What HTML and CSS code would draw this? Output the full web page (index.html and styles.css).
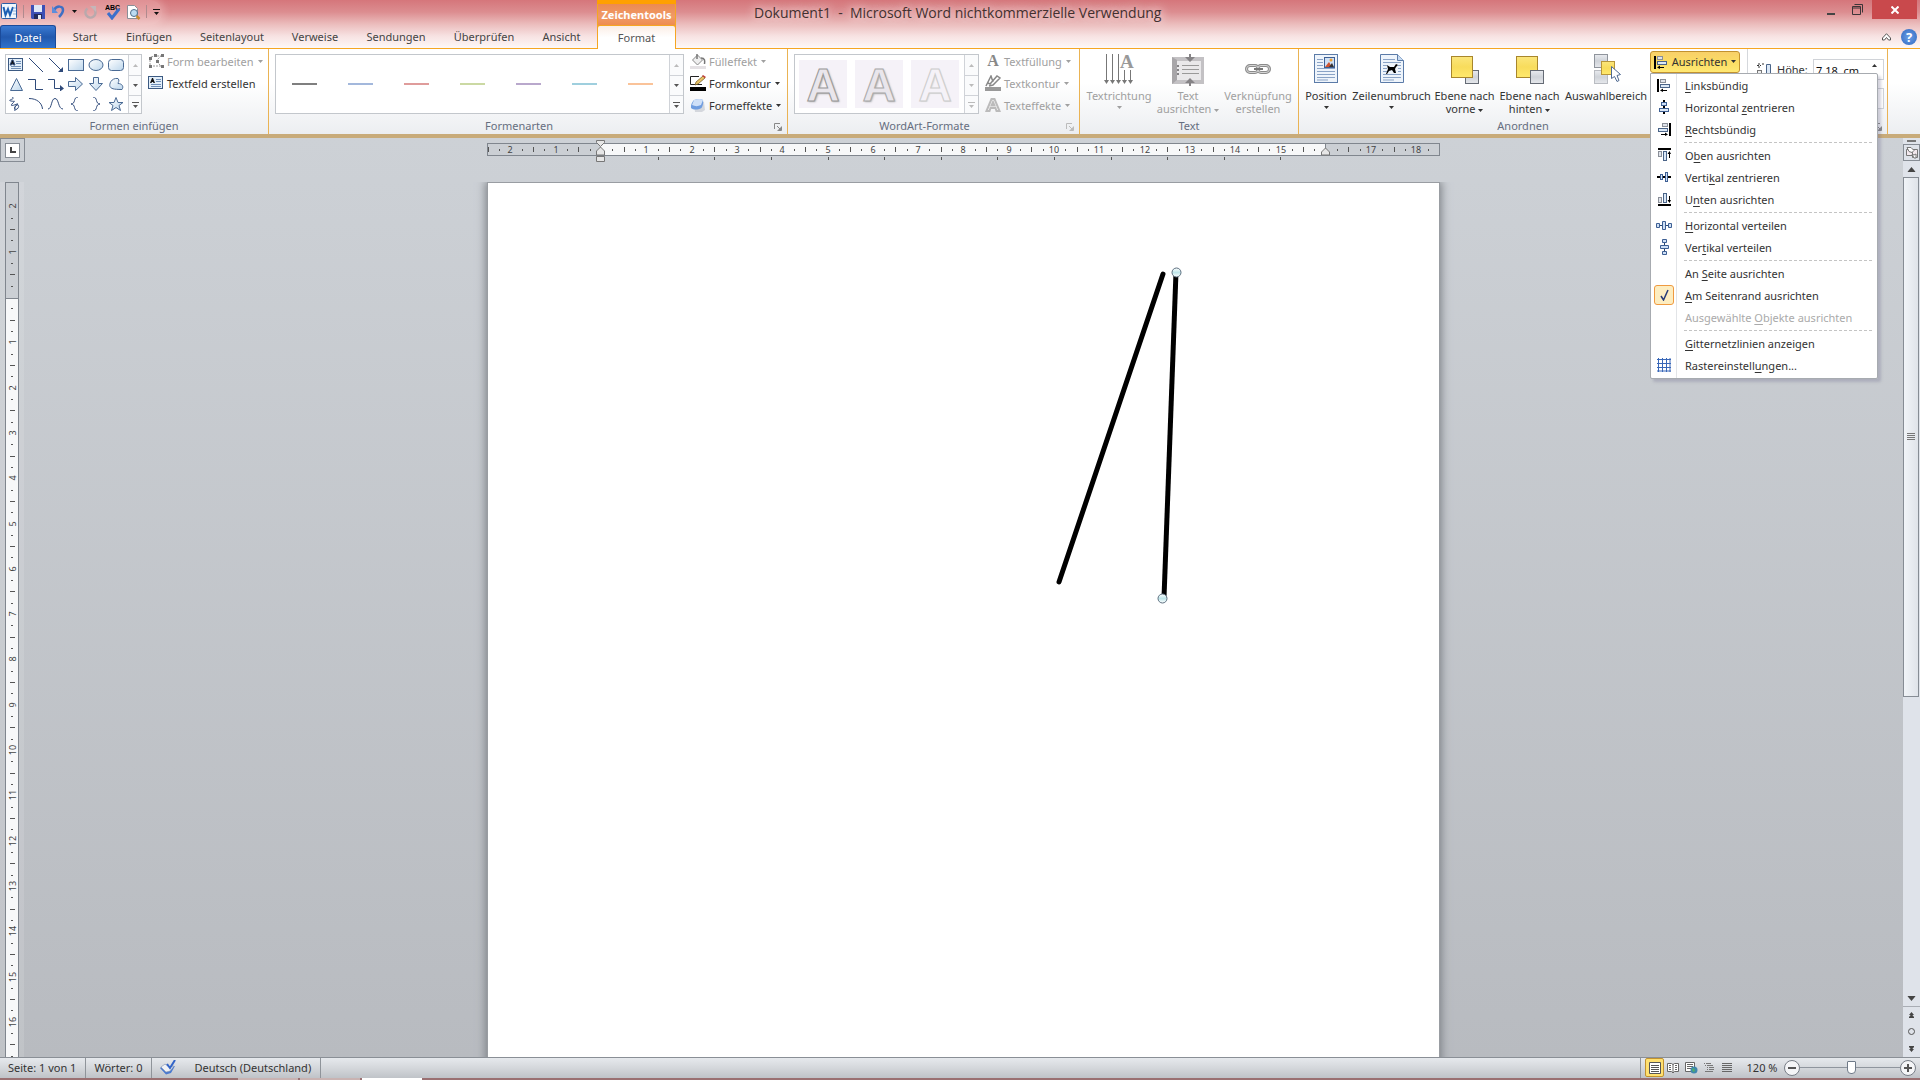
FILE: index.html
```html
<!DOCTYPE html>
<html lang="de">
<head>
<meta charset="utf-8">
<title>Dokument1 - Microsoft Word nichtkommerzielle Verwendung</title>
<link rel="stylesheet" href="styles.css">
</head>
<body>
<svg class="defs" width="0" height="0" aria-hidden="true">
  <defs>
    <linearGradient id="gBlue" x1="0" y1="0" x2="1" y2="1"><stop offset="0" stop-color="#fff"/><stop offset="1" stop-color="#bcd6ec"/></linearGradient>
    <linearGradient id="gYel" x1="0" y1="0" x2="0" y2="1"><stop offset="0" stop-color="#fbe67c"/><stop offset=".5" stop-color="#f8dc5c"/><stop offset="1" stop-color="#ffe96c"/></linearGradient>
    <linearGradient id="gGrey" x1="0" y1="0" x2="0" y2="1"><stop offset="0" stop-color="#e9ebef"/><stop offset=".5" stop-color="#cfd3d9"/><stop offset="1" stop-color="#e6e8ec"/></linearGradient>
    <linearGradient id="gKnob" x1="0" y1="0" x2="0" y2="1"><stop offset="0" stop-color="#fff"/><stop offset=".5" stop-color="#bfe6ea"/><stop offset="1" stop-color="#fff"/></linearGradient>
    <symbol id="dd" viewBox="0 0 5 3"><path d="M0 0h5L2.500 3z" fill="currentColor"/></symbol>
    <symbol id="up" viewBox="0 0 5 3"><path d="M0 3h5L2.500 0z" fill="currentColor"/></symbol>
    <symbol id="more" viewBox="0 0 7 6"><path d="M0 0h7v1H0zM1 3h5L3.500 6z" fill="currentColor"/></symbol>
    <symbol id="launch" viewBox="0 0 8 8"><path d="M.5 6V.5H6M3 3l3 3M7.500 3.500v4h-4" fill="none" stroke="currentColor"/><path d="M7 4v3H4z" fill="currentColor"/></symbol>
    <symbol id="tbox" viewBox="0 0 16 14"><rect x=".5" y=".5" width="14" height="12" fill="#e3effa" stroke="#3c5a82"/><path d="M2 7l2-5h1l2 5H5.500L5 6H4l-.5 1z" fill="#111"/><path d="M8 3.500h5M8 5.500h5M3 8.500h10M3 10.500h10" stroke="#6f8fb8"/></symbol>
    <symbol id="alL" viewBox="0 0 14 14"><path d="M0 1h2v13H0z" fill="#000"/><rect x="3.500" y="1.500" width="5" height="3" fill="#dfe3ea" stroke="#8a8f98"/><rect x="3.500" y="6.500" width="9" height="3" fill="#dbe8f6" stroke="#4a6488"/><path d="M5 12h5v1H5zM3 12.500L6 10.500v3.500z" fill="#000"/></symbol>
  </defs>
</svg>

<header class="top">
  <div class="top-left">
    <div class="qat">
      <svg width="17" height="17" viewBox="0 0 17 17"><rect x=".5" y=".5" width="15" height="15" rx="1" fill="#f1f6fc" stroke="#2b5ea6"/><path d="M2.500 4l2 8 2.500-6 2 6 3-8" fill="none" stroke="#1d5fb4" stroke-width="2"/><path d="M12 5h3M12 8h3M12 11h3" stroke="#8fb0da"/></svg>
      <span class="qsep"></span>
      <button aria-label="Speichern"><svg width="14" height="14" viewBox="0 0 14 14"><path d="M0 0h14v14H1l-1-1z" fill="#3d4fb5"/><path d="M3 0h8v7H3z" fill="#dfe8f7"/><path d="M3 9h8v5H3z" fill="#222a5c"/><path d="M7 10h3v4H7z" fill="#e6ecf6"/></svg></button>
      <button class="undo" aria-label="Rückgängig"><svg width="13" height="13" viewBox="0 0 13 13"><path d="M2 5c3-5 9-4 9 0 0 3-2 5-4 7" fill="none" stroke="#3f6fc4" stroke-width="2.500"/><path d="M0 1v7h6z" fill="#5d8ddb"/></svg><svg width="5" height="3"><use href="#dd"/></svg></button>
      <button class="redo" aria-label="Wiederholen"><svg width="13" height="14" viewBox="0 0 13 14"><path d="M3.500 3.500a5 5 0 1 0 7 1" fill="none" stroke="#b9a9ac" stroke-width="2.500"/><path d="M6 1h6v6z" fill="#c4b6b9"/></svg></button>
      <button aria-label="Rechtschreibung"><svg width="16" height="16" viewBox="0 0 16 16"><text x="0" y="6" font-size="7" class="abc">ABC</text><path d="M3 9l4 5 7-9" fill="none" stroke="#3c6fcb" stroke-width="3"/></svg></button>
      <button aria-label="Seitenansicht"><svg width="15" height="16" viewBox="0 0 15 16"><path d="M1.500 1.500h7l3 3v10h-10z" fill="#fff" stroke="#8a8f98"/><circle cx="8" cy="9" r="3.500" fill="#bcdcf2" stroke="#4d6d8c"/><path d="M10.500 12l3 3" stroke="#c98a2c" stroke-width="2.500"/></svg></button>
      <span class="qsep"></span>
      <button aria-label="Anpassen"><svg width="7" height="6"><use href="#more"/></svg></button>
    </div>
    <nav class="tabs">
      <button class="datei">Datei</button><button>Start</button><button>Einfügen</button><button>Seitenlayout</button><button>Verweise</button><button>Sendungen</button><button>Überprüfen</button><button>Ansicht</button>
    </nav>
  </div>
  <div class="context">
    <div class="context-name">Zeichentools</div>
    <button class="format">Format</button>
  </div>
  <div class="top-right">
    <div class="titlebar">
      <h1>Dokument1&nbsp; -&nbsp; Microsoft Word nichtkommerzielle Verwendung</h1>
      <div class="winbtns">
        <button aria-label="Minimieren"><svg width="8" height="12"><path d="M0 9h8v2H0z" fill="#444"/></svg></button>
        <button aria-label="Wiederherstellen"><svg width="11" height="11" viewBox="0 0 11 11"><path d="M.5 2.500h8v8h-8zM.5 4h8M2.500 .5h8v8" fill="none" stroke="#3c3538"/></svg></button>
        <button class="close" aria-label="Schließen"><svg width="8" height="8" viewBox="0 0 8 8"><path d="M.5 .5l7 7M7.500 .5l-7 7" stroke="#fff" stroke-width="2"/></svg></button>
      </div>
    </div>
    <div class="helprow">
      <button aria-label="Menüband minimieren"><svg width="9" height="8" viewBox="0 0 9 8"><path d="M4.500 .7L8.500 5v2H6.500l-2-2.500L2.500 7H.5V5z" fill="#fff" stroke="#555"/></svg></button>
      <button class="help" aria-label="Hilfe">?</button>
    </div>
  </div>
</header>

<section class="ribbon">
  <div class="group g1">
    <div class="gbody">
      <div class="gallery shapes">
        <div class="shapegrid">
          <svg viewBox="0 0 16 14"><use href="#tbox"/></svg>
          <svg viewBox="0 0 16 14"><path d="M1 0l14 14"/></svg>
          <svg viewBox="0 0 16 14"><path d="M1 0l12 12"/><path class="f" d="M15 14v-5l-5 5z"/></svg>
          <svg viewBox="0 0 16 14"><rect class="b" x=".5" y="1.500" width="15" height="11"/></svg>
          <svg viewBox="0 0 16 14"><ellipse class="b" cx="8" cy="7" rx="7" ry="5.500"/></svg>
          <svg viewBox="0 0 16 14"><rect class="b" x=".5" y="1.500" width="15" height="11" rx="3"/></svg>
          <svg viewBox="0 0 16 14"><path class="b" d="M8.500 1.500l6 12h-12z"/></svg>
          <svg viewBox="0 0 16 14"><path d="M0 2.500h7.500v10H15"/></svg>
          <svg viewBox="0 0 16 14"><path d="M0 2.500h6.500v9H12"/><path class="f" d="M12 8l4 3.500-4 3z"/></svg>
          <svg viewBox="0 0 16 14"><path class="b" d="M.5 4.500h7v-4l7 6.500-7 6.500v-4h-7z"/></svg>
          <svg viewBox="0 0 16 14"><path class="b" d="M5.500 .5h5v6h4l-6.500 7-6.500-7h4z"/></svg>
          <svg viewBox="0 0 16 14"><path class="b" d="M10 1.500c-7-1-9 6-8 8s3 3 12 3c2-3 0-6-4-6 0-1 2-3 0-5z"/></svg>
          <svg viewBox="0 0 16 14"><path d="M4 0c5 2-6 3-1 4s4-1 1 3 6-1 6 0-5 3-3 5 5-3 3-4-4 2-3 6"/></svg>
          <svg viewBox="0 0 16 14"><path d="M1 1.500C9 1.500 14 6 14.500 12"/></svg>
          <svg viewBox="0 0 16 14"><path d="M0 12C4 12 3 1.500 7 1.500S10 12 15 12"/></svg>
          <svg viewBox="0 0 16 14"><path d="M10 0C5 0 8 7 3 7c5 0 2 7 7 7"/></svg>
          <svg viewBox="0 0 16 14"><path d="M5 0c5 0 2 7 7 7-5 0-2 7-7 7"/></svg>
          <svg viewBox="0 0 16 14"><path class="b" d="M8 .5l2 5h5l-4 3 1.500 5L8 10.500l-4.500 3L5 8.500l-4-3h5z"/></svg>
        </div>
        <div class="gscroll"><button class="off" aria-label="Nach oben"><svg width="5" height="3"><use href="#up"/></svg></button><button aria-label="Nach unten"><svg width="5" height="3"><use href="#dd"/></svg></button><button aria-label="Weitere"><svg width="7" height="6"><use href="#more"/></svg></button></div>
      </div>
      <div class="smalls">
        <button class="small" disabled><svg width="16" height="14" viewBox="0 0 16 14"><path d="M2 3v9h11l-5-5 5-5H8z" fill="none" stroke="#9a9a9a" stroke-dasharray="2 1"/><path d="M1 3h3v3H1zM6 0h3v3H6zM13 0h3v3h-3zM1 11h3v3H1zM13 11h3v3h-3zM8 6h3v3H8z" fill="#777"/></svg><span>Form bearbeiten</span><svg width="5" height="3"><use href="#dd"/></svg></button>
        <button class="small"><svg width="16" height="14"><use href="#tbox"/></svg><span>Textfeld erstellen</span></button>
      </div>
    </div>
    <div class="glabel">Formen einfügen</div>
  </div>

  <div class="group g2">
    <div class="gbody">
      <div class="gallery styles">
        <div class="lines"><i class="l1"></i><i class="l2"></i><i class="l3"></i><i class="l4"></i><i class="l5"></i><i class="l6"></i><i class="l7"></i></div>
        <div class="gscroll"><button class="off" aria-label="Nach oben"><svg width="5" height="3"><use href="#up"/></svg></button><button aria-label="Nach unten"><svg width="5" height="3"><use href="#dd"/></svg></button><button aria-label="Weitere"><svg width="7" height="6"><use href="#more"/></svg></button></div>
      </div>
      <div class="smalls">
        <button class="small" disabled><svg width="16" height="16" viewBox="0 0 16 16"><path d="M2.500 7l5-5 5 5-5 5z" fill="#eee" stroke="#888"/><path d="M7 6V1M11 5c4 0 4 3 3.500 6" fill="none" stroke="#777" stroke-width="1.500"/><path d="M0 13h16v3H0z" fill="#e4e1e4"/></svg><span>Fülleffekt</span><svg width="5" height="3"><use href="#dd"/></svg></button>
        <button class="small"><svg width="16" height="16" viewBox="0 0 16 16"><path d="M12 9.500H.5v-8H9" fill="#fff" stroke="#222"/><path d="M5 10l1-3 7-6 2 2-7 6z" fill="#e8c264" stroke="#6b5323" stroke-width=".7"/><path d="M12 1l1-1 3 2-1 1z" fill="#c23b3b"/><path d="M0 12h16v4H0z" fill="#000"/></svg><span>Formkontur</span><svg width="5" height="3"><use href="#dd"/></svg></button>
        <button class="small"><svg width="16" height="15" viewBox="0 0 16 15"><path d="M4 5l10-1 1 8-3 2H5z" fill="#d4d7dd"/><path d="M4 2c4-1.500 7-1.500 9 0 .5 3 0 5-1.500 8-4 2-8 2-10.500 0C.5 7 2 4 4 2z" fill="#6f9de0"/><path d="M4 2c4-1.500 7-1.500 9 0l-2 5c-3 1.500-6 1.500-9 0z" fill="#cfe0f8"/></svg><span>Formeffekte</span><svg width="5" height="3"><use href="#dd"/></svg></button>
      </div>
    </div>
    <div class="glabel wide">Formenarten<button class="launch" aria-label="Form formatieren"><svg width="8" height="8"><use href="#launch"/></svg></button></div>
  </div>

  <div class="group g3">
    <div class="gbody">
      <div class="gallery wordart">
        <div class="tiles"><b class="a1">A</b><b class="a2">A</b><b class="a3">A</b></div>
        <div class="gscroll"><button class="off" aria-label="Nach oben"><svg width="5" height="3"><use href="#up"/></svg></button><button class="off" aria-label="Nach unten"><svg width="5" height="3"><use href="#dd"/></svg></button><button class="off" aria-label="Weitere"><svg width="7" height="6"><use href="#more"/></svg></button></div>
      </div>
      <div class="smalls">
        <button class="small" disabled><b class="serifA">A</b><span>Textfüllung</span><svg width="5" height="3"><use href="#dd"/></svg></button>
        <button class="small" disabled><svg width="16" height="16" viewBox="0 0 16 16"><path d="M1 11L6 1l2 6M3 8l2 1 7-8 3 2-7 7-4 1" fill="none" stroke="#888" stroke-width="1.500"/><path d="M0 12h16v4H0z" fill="#999"/></svg><span>Textkontur</span><svg width="5" height="3"><use href="#dd"/></svg></button>
        <button class="small" disabled><svg width="16" height="16" viewBox="0 0 16 16"><path d="M1.500 14L6.500 2h3l5 12h-3l-1-3h-5l-1 3zM6.500 8.500h3L8 5z" fill="#fff" stroke="#bbb" stroke-width="2"/></svg><span>Texteffekte</span><svg width="5" height="3"><use href="#dd"/></svg></button>
      </div>
    </div>
    <div class="glabel wide">WordArt-Formate<button class="launch pale" aria-label="Text formatieren"><svg width="8" height="8"><use href="#launch"/></svg></button></div>
  </div>

  <div class="group g4">
    <div class="gbody bigs">
      <button class="big" disabled><svg width="32" height="32" viewBox="0 0 32 32"><path d="M3.500 0v28M9.500 0v28M15.500 0v28M21.500 16v12M27.500 16v12" stroke="#777"/><path d="M1 26h5l-2.500 4zM7 26h5l-2.500 4zM13 26h5l-2.500 4zM19 26h5l-2.500 4zM25 26h5l-2.500 4z" fill="#777"/><text x="17" y="14" font-size="19" class="ta">A</text></svg><span>Textrichtung</span><svg width="5" height="3"><use href="#dd"/></svg></button>
      <button class="big" disabled><svg width="32" height="32" viewBox="0 0 32 32"><path d="M0 3h32v27H0z" fill="#c3c1c4"/><path d="M3 7h26v19H3z" fill="#e9e8ea"/><path d="M0 3l5 3v20l-5 4z" fill="#a8a6a9"/><path d="M10 11.500h17M10 15.500h17M10 19.500h17" stroke="#999" stroke-width="1"/><path d="M5 11h2v2H5zM5 15h2v2H5zM5 19h2v2H5zM17 0h2v3h4l-5 5-5-5h4zM17 32h2v-3h4l-5-5-5 5h4z" fill="#858386"/></svg><span>Text<br>ausrichten <svg width="5" height="3"><use href="#dd"/></svg></span></button>
      <button class="big" disabled><svg width="32" height="32" viewBox="0 0 32 32"><g fill="none" stroke="#8b8b8b" stroke-width="3"><rect x="4.500" y="11.500" width="12" height="7" rx="3.500"/><rect x="15.500" y="11.500" width="12" height="7" rx="3.500"/></g><g fill="none" stroke="#d6d6d6"><rect x="4.500" y="11.500" width="12" height="7" rx="3.500"/><rect x="15.500" y="11.500" width="12" height="7" rx="3.500"/></g><path d="M12 15h9" stroke="#777" stroke-width="2"/></svg><span>Verknüpfung<br>erstellen</span></button>
    </div>
    <div class="glabel">Text</div>
  </div>

  <div class="group g5">
    <div class="gbody bigs">
      <button class="big"><svg width="32" height="32" viewBox="0 0 32 32"><rect x="4.500" y=".5" width="23" height="28" fill="#eef4fb" stroke="#5b7ba8"/><path d="M7 5.500h6M7 8.500h6M7 11.500h6M7 14.500h18M7 17.500h18M7 20.500h18M7 23.500h18M7 26h11" stroke="#8aa3c6"/><rect x="14.500" y="3.500" width="10" height="10" fill="#cfe0f5" stroke="#3d5f94"/><path d="M15 13l4-5 3 5z" fill="#d0532f"/><path d="M19 13l3-4 2 4z" fill="#333"/><circle cx="21" cy="6" r="1.500" fill="#f0a030"/></svg><span>Position</span><svg width="5" height="3"><use href="#dd"/></svg></button>
      <button class="big"><svg width="32" height="32" viewBox="0 0 32 32"><path d="M4.500 .5h17l6 6v22h-23z" fill="#eef4fb" stroke="#5b7ba8"/><path d="M21.500 .5v6h6" fill="#c7dbf2" stroke="#5b7ba8"/><path d="M7 5.500h12M7 8.500h18M7 11.500h4M22 11.500h3M7 14.500h4M22 14.500h3M7 17.500h4M22 17.500h3M7 20.500h18M7 23.500h18M7 26h11" stroke="#8aa3c6"/><path d="M11 11l3 2h4l2-3 2 1-2 2-1 2 1 4h-2l-2-3-3 1-2 3h-1l2-5z" fill="#000"/></svg><span>Zeilenumbruch</span><svg width="5" height="3"><use href="#dd"/></svg></button>
      <button class="big"><svg width="32" height="32" viewBox="0 0 32 32"><rect x="16.500" y="16.500" width="13" height="13" fill="url(#gGrey)" stroke="#656b75"/><rect x="2.500" y="2.500" width="21" height="21" fill="url(#gYel)" stroke="#a8862c"/></svg><span>Ebene nach<br>vorne <svg width="5" height="3"><use href="#dd"/></svg></span></button>
      <button class="big"><svg width="32" height="32" viewBox="0 0 32 32"><rect x="2.500" y="2.500" width="21" height="21" fill="url(#gYel)" stroke="#a8862c"/><rect x="16.500" y="16.500" width="13" height="13" fill="url(#gGrey)" stroke="#656b75"/></svg><span>Ebene nach<br>hinten <svg width="5" height="3"><use href="#dd"/></svg></span></button>
      <button class="big"><svg width="32" height="32" viewBox="0 0 32 32"><rect x="4.500" y=".5" width="13" height="13" fill="url(#gGrey)" stroke="#8f949c"/><rect x="4.500" y="16.500" width="13" height="13" fill="url(#gGrey)" stroke="#b9bcc2"/><rect x="11.500" y="7.500" width="13" height="13" fill="url(#gYel)" stroke="#b8963a"/><path d="M21.500 12.500v12l3-2 2.500 5 2-1-2-5 3.500-1z" fill="#fff" stroke="#4f6a92"/></svg><span>Auswahlbereich</span></button>
      <div class="align">
        <button class="alignbtn" aria-haspopup="menu" aria-expanded="true"><svg width="14" height="14"><use href="#alL"/></svg><span>Ausrichten</span><svg width="5" height="3"><use href="#dd"/></svg></button>
        <div class="menu" role="menu">
          <button role="menuitem"><i><svg width="14" height="14"><use href="#alL"/></svg></i><span><u>L</u>inksbündig</span></button>
          <button role="menuitem"><i><svg width="12" height="14" viewBox="0 0 12 14"><path d="M5 0h2v14H5z" fill="#000"/><rect x="3.500" y="2.500" width="5" height="3" fill="#cfe0f5" stroke="#3d5f94"/><rect x="1.500" y="8.500" width="9" height="3" fill="#dce8f6" stroke="#3d5f94"/></svg></i><span>Horizontal <u>z</u>entrieren</span></button>
          <button role="menuitem"><i><svg class="flip" width="14" height="14"><use href="#alL"/></svg></i><span><u>R</u>echtsbündig</span></button>
          <hr>
          <button role="menuitem"><i><svg class="rot" width="14" height="14"><use href="#alL"/></svg></i><span>O<u>b</u>en ausrichten</span></button>
          <button role="menuitem"><i><svg width="14" height="12" viewBox="0 0 14 12"><path d="M0 5h14v2H0z" fill="#000"/><rect x="3.500" y="3.500" width="2" height="5" fill="#dce8f6" stroke="#3d5f94"/><rect x="8.500" y="1.500" width="2" height="9" fill="#cfe0f5" stroke="#3d5f94"/></svg></i><span>Verti<u>k</u>al zentrieren</span></button>
          <button role="menuitem"><i><svg class="rotl" width="14" height="14"><use href="#alL"/></svg></i><span>U<u>n</u>ten ausrichten</span></button>
          <hr>
          <button role="menuitem"><i><svg width="16" height="9" viewBox="0 0 16 9"><path d="M0 4h16v1H0z" fill="#28466f"/><path d="M.5 2.500h3v4h-3zM6.500 .5h3v8h-3zM12.500 2.500h3v4h-3z" fill="#cfe0f5" stroke="#3d5f94"/></svg></i><span><u>H</u>orizontal verteilen</span></button>
          <button role="menuitem"><i><svg width="9" height="16" viewBox="0 0 9 16"><path d="M4 0h1v16H4z" fill="#28466f"/><path d="M2.500 .5v3h4v-3zM.5 6.500v3h8v-3zM2.500 12.500v3h4v-3z" fill="#cfe0f5" stroke="#3d5f94"/></svg></i><span>Ver<u>t</u>ikal verteilen</span></button>
          <hr>
          <button role="menuitemradio" aria-checked="false"><i></i><span>An <u>S</u>eite ausrichten</span></button>
          <button role="menuitemradio" aria-checked="true"><i class="checked"><svg width="9" height="12" viewBox="0 0 9 12"><path d="M1 7l2.500 4L8 1" fill="none" stroke="#263a78" stroke-width="1.500"/></svg></i><span><u>A</u>m Seitenrand ausrichten</span></button>
          <button role="menuitemradio" aria-checked="false" disabled><i></i><span>Ausgewählte <u>O</u>bjekte ausrichten</span></button>
          <hr>
          <button role="menuitem"><i></i><span><u>G</u>itternetzlinien anzeigen</span></button>
          <button role="menuitem"><i><svg width="14" height="14" viewBox="0 0 14 14"><path d="M0 1.500h14M0 5.500h14M0 9.500h14M0 13h14M1.500 0v14M5.500 0v14M9.500 0v14M13 0v14" stroke="#3867b8"/></svg></i><span>Rastereinstell<u>u</u>ngen...</span></button>
        </div>
      </div>
    </div>
    <div class="glabel">Anordnen</div>
  </div>

  <div class="group g6">
    <div class="gbody sizes">
      <div class="field"><svg width="14" height="14" viewBox="0 0 14 14"><path d="M2 0v5M0 2.500h4M5 1h3" stroke="#333" stroke-dasharray="2 1"/><rect x=".5" y="7.500" width="4" height="4" fill="#eee" stroke="#777"/><path d="M9.500 13V1.500h4V13" fill="#dce8f6" stroke="#4a6488"/></svg><label for="h">Höhe:</label><span class="spin"><input id="h" type="text" value="7,18&nbsp; cm"><svg width="5" height="3"><use href="#up"/></svg></span></div>
      <div class="field"><svg width="14" height="14"></svg><label for="w">Breite:</label><span class="spin"><input id="w" type="text" value="0,2&nbsp; cm"></span></div>
    </div>
    <div class="glabel">Größe<button class="launch" aria-label="Layout"><svg width="8" height="8"><use href="#launch"/></svg></button></div>
  </div>
</section>

<main class="work">
  <div class="tabsel"><button aria-label="Tabstopp links"><svg width="6" height="6"><path d="M0 0h2v4h4v2H0z" fill="#444"/></svg></button></div>
  <div class="hruler"><svg id="hr" width="953" height="24"></svg></div>
  <div class="vruler"><svg id="vr" width="14" height="1400"></svg></div>
  <div class="canvas">
    <article class="page">
      <svg class="drawing" width="951" height="600" viewBox="0 0 951 600">
        <path d="M675 91L571 399" stroke="#000" stroke-width="5" stroke-linecap="round"/>
        <path d="M688 89L676 415" stroke="#000" stroke-width="5"/>
        <circle cx="688.500" cy="89.500" r="4.500" fill="url(#gKnob)" stroke="#5d6f80"/>
        <circle cx="674.500" cy="415.500" r="4.500" fill="url(#gKnob)" stroke="#5d6f80"/>
      </svg>
    </article>
  </div>
  <div class="scroll">
    <span class="split"></span>
    <button class="rtoggle" aria-label="Lineal"><svg width="12" height="12" viewBox="0 0 12 12"><path d="M.5 2.500h6v6h-6zM5.500 2.500h6v8h-5v-5" fill="#f3e9ee" stroke="#777"/><path d="M1 .5h4l3 3-2 2-3-1zM6 7l2 1 2-1v4H8z" fill="#fff" stroke="#777"/></svg></button>
    <button class="sarrow" aria-label="Nach oben blättern"><svg width="9" height="5" viewBox="0 0 5 3"><use href="#up"/></svg></button>
    <div class="track"><div class="thumb"><svg width="8" height="8"><path d="M0 .5h8M0 2.500h8M0 4.500h8M0 6.500h8" stroke="#777"/></svg></div></div>
    <button class="sarrow" aria-label="Nach unten blättern"><svg width="9" height="5" viewBox="0 0 5 3"><use href="#dd"/></svg></button>
    <button class="nav first" aria-label="Vorherige Seite"><svg width="5" height="6"><path d="M2.500 0L5 3H0zM2.500 2L5 5H0zM0 5h5v1H0z" fill="#444"/></svg></button>
    <button class="nav" aria-label="Browseobjekt"><svg width="7" height="7"><circle cx="3.500" cy="3.500" r="3" fill="none" stroke="#555"/></svg></button>
    <button class="nav" aria-label="Nächste Seite"><svg width="5" height="6"><path d="M2.500 6L5 3H0zM2.500 4L5 1H0zM0 0h5v1H0z" fill="#444"/></svg></button>
  </div>
</main>

<footer class="status">
  <button>Seite: 1 von 1</button>
  <button>Wörter: 0</button>
  <button class="proof" aria-label="Rechtschreibprüfung"><svg width="17" height="15" viewBox="0 0 17 15"><path d="M0 8l5-4 5 3 5-1-4 7-5 1.500z" fill="#4a7ad0"/><path d="M1 7l4-3 4 3 5-1-4 5-4 1z" fill="#f0f2f6" stroke="#8790a0" stroke-width=".5"/><path d="M7 4l3 4 5-8" fill="none" stroke="#3264c8" stroke-width="2"/></svg></button>
  <button class="lang">Deutsch (Deutschland)</button>
  <div class="views">
    <button class="on" aria-label="Seitenlayout"><svg width="12" height="12"><path d="M.5 .5h11v11H.5z" fill="#fff" stroke="#555"/><path d="M2 3.500h8M2 5.500h8M2 7.500h8M2 9.500h8" stroke="#555"/></svg></button>
    <button aria-label="Vollbild-Lesemodus"><svg width="12" height="12"><path d="M.5 1.500h4l1.500 1 1.500-1h4v8h-4L6 11l-1.500-1.500h-4zM6 2v9" fill="#fff" stroke="#666"/><path d="M2 3.500h2M2 5.500h2M2 7.500h2M8 3.500h2M8 5.500h2M8 7.500h2" stroke="#666"/></svg></button>
    <button aria-label="Weblayout"><svg width="13" height="12"><path d="M.5 .5h9v9H.5z" fill="#fff" stroke="#666"/><path d="M2 2.500h6M2 4.500h6M2 6.500h4" stroke="#666"/><circle cx="9" cy="8" r="3.500" fill="#3f87ae"/><path d="M7 7l2-1 1 3-2 1z" fill="#4fae6a"/></svg></button>
    <button aria-label="Gliederung"><svg width="10" height="10"><path d="M0 .5h1M2 .5h5M1 2.500h1M3 2.500h6M3 4.500h1M5 4.500h5M3 6.500h1M5 6.500h5M1 8.500h8" stroke="#777"/></svg></button>
    <button aria-label="Entwurf"><svg width="10" height="10"><path d="M0 .5h10M0 2.500h10M0 4.500h10M0 6.500h10M0 8.500h10" stroke="#666"/></svg></button>
    <button class="pct">120 %</button>
    <button class="round" aria-label="Verkleinern"><svg width="8" height="8"><path d="M0 3h8v2H0z" fill="#555"/></svg></button>
    <input class="zoom" type="range" min="0" max="100" value="52" aria-label="Zoom">
    <button class="round" aria-label="Vergrößern"><svg width="8" height="8"><path d="M0 3h8v2H0zM3 0h2v8H3z" fill="#555"/></svg></button>
  </div>
</footer>
<div class="taskbar"><span></span><span></span><span class="active"></span></div>
<script src="rulers.js"></script>
</body>
</html>
```
FILE: rulers.js
```js
const CM = 45.3;
const r = (x, y, w, h, fill) => `<rect x="${Math.round(x)}" y="${y}" width="${w}" height="${h}" fill="${fill}"/>`;

function horizontal() {
  const zero = 114, end = 839, width = 953;
  let s = `<rect x=".5" y="4.500" width="${width - 1}" height="12" fill="#cbcfd4" stroke="#80868e"/>`;
  s += `<rect x="${zero}" y="5" width="${end - zero}" height="11" fill="#f7f8f9"/>`;
  for (let q = -10; q <= 73; q++) {
    const x = zero + q * CM / 4;
    if (x > width - 4 || q === 0 || q === 64) continue;
    if (q % 4 === 0) s += `<text x="${Math.round(x)}" y="14">${Math.abs(q / 4)}</text>`;
    else if (q % 2 === 0) s += r(x, 8, 1, 5, '#555');
    else s += r(x, 10, 1, 2, '#555');
  }
  for (let t = 1; t <= 12; t++) s += r(zero + t * CM * 1.25, 18, 1, 3, '#555');
  s += r(end - 1, 4, 1, 12, '#80868e');
  s += `<path d="M109.500 1.500h8v2l-4 4-4-4zM113.500 8l4 4v4h-8v-4zM109.500 17.500h8v5h-8z" fill="#e6e6e6" stroke="#777"/>`;
  s += `<path d="M838.500 9l4 4v3h-8v-3z" fill="#e6e6e6" stroke="#777"/>`;
  document.getElementById('hr').innerHTML = s;
}

function vertical() {
  const zero = 116, height = 1400;
  let s = `<rect x=".5" y=".5" width="13" height="${height - 1}" fill="#f7f8f9" stroke="#80868e"/>`;
  s += `<rect x=".5" y=".5" width="13" height="${zero}" fill="#cbcfd4" stroke="#80868e"/>`;
  for (let q = -8; q <= 110; q++) {
    const y = Math.round(zero + q * CM / 4) - 1;
    if (q === 0) continue;
    if (q % 4 === 0) s += `<text x="0" y="0" transform="translate(11 ${y}) rotate(-90)">${Math.abs(q / 4)}</text>`;
    else if (q % 2 === 0) s += r(5, y, 5, 1, '#555');
    else s += r(6, y, 2, 1, '#555');
  }
  document.getElementById('vr').innerHTML = s;
}

horizontal();
vertical();
```
FILE: styles.css
```css
* { box-sizing: border-box; }
html, body { height: 100%; }
body { margin: 0; display: flex; flex-direction: column; overflow: hidden; font: 11px/13px "Noto Sans", "Open Sans", sans-serif; color: #333; background: #c0c3c8; }
button { font: inherit; color: inherit; background: none; border: 0; padding: 0; margin: 0; display: flex; align-items: center; justify-content: center; }
svg { display: block; flex: none; }
.defs { position: absolute; }

.top { display: flex; flex: none; height: 49px; border-bottom: 1px solid #f5a623; background: linear-gradient(#d5767b, #dc8d90 25%, #ebbcbc 50%, #f7e2e2 75%, #fdf8f7); }
.top-left { width: 597px; display: flex; flex-direction: column; }
.qat { height: 25px; width: 162px; padding: 0 2px 2px 1px; display: flex; align-items: center; gap: 5px; border-radius: 0 12px 12px 0; background: rgba(255, 225, 225, .25); box-shadow: 0 0 6px 3px rgba(255, 225, 225, .25); }
.qat button { color: #111; }
.qat .undo { gap: 7px; margin: 0 2px 0 2px; }
.qat .redo { margin-right: 3px; }
.qsep { width: 1px; height: 13px; margin-right: 2px; background: #b08a8e; }
.abc { font-family: "Liberation Sans", sans-serif; font-weight: 700; }
.tabs { height: 23px; display: grid; grid-template-columns: 56px 58px 70px 96px 70px 92px 84px 71px; color: #444; }
.tabs .datei { color: #fff; border: 1px solid #1b4b9a; border-bottom: 0; border-radius: 3px 3px 0 0; background: linear-gradient(#3a7ad2, #2259ae 50%, #2f72cc); }
.context { width: 79px; flex: none; height: 49px; display: flex; flex-direction: column; border-top: 4px solid #ffa000; background: #f5a623; }
.context-name { height: 21px; line-height: 21px; text-align: center; color: #fff; font-weight: 700; margin: 0 1px; background: linear-gradient(#ec8a50, #f09a68 60%, #ee8c50); }
.format { flex: 1; margin: 1px 1px 0; padding-bottom: 1px; border-radius: 2px 2px 0 0; color: #555; background: linear-gradient(#fbeee6, #fff 50%); }
.top-right { flex: 1; display: flex; flex-direction: column; }
.titlebar { height: 26px; display: flex; justify-content: space-between; align-items: flex-start; }
h1 { margin: 0 0 0 78px; font: 400 14px/25px "Open Sans", sans-serif; color: #42302f; text-shadow: 0 0 8px #fbe3e3, 0 0 12px #fbe3e3; white-space: nowrap; }
.winbtns { display: flex; margin-right: 3px; height: 19px; }
.winbtns button { width: 26px; }
.winbtns .close { width: 45px; margin-left: 2px; background: #c9494c; }
.helprow { height: 22px; display: flex; justify-content: flex-end; align-items: center; gap: 10px; padding-right: 3px; }
.help { width: 16px; height: 16px; border-radius: 8px; color: #fff; font-size: 13px; font-weight: 700; background: radial-gradient(#6da0e6, #2e66bf); }

.ribbon { flex: none; height: 89px; display: flex; border-bottom: 4px solid #c8ab7a; background: linear-gradient(#fff, #fff 40%, #eceef1); }
.group { flex: none; display: flex; flex-direction: column; border-right: 1px solid #eab354; }
.g1 { width: 269px; } .g2 { width: 519px; } .g3 { width: 292px; } .g4 { width: 219px; } .g5 { width: 449px; border-right-color: #d5d8dc; } .g6 { width: 140px; }
.gbody { height: 68px; display: flex; align-items: flex-start; }
.glabel { position: relative; line-height: 17px; text-align: center; color: #666e80; }
.wide { padding-right: 18px; }
.launch { position: absolute; right: 5px; top: 6px; color: #888; }
.pale { color: #bbb; }
.gallery { display: flex; height: 60px; margin-top: 5px; border: 1px solid #c3c7cc; background: #fff; }
.gscroll { width: 14px; display: grid; grid-template-rows: 20px 20px 1fr; border-left: 1px solid #d0d3d8; color: #555; background: #fafbfc; }
.gscroll button + button { border-top: 1px solid #d0d3d8; }
.gscroll .off { color: #bbb; }
.shapes { width: 137px; margin-left: 5px; }
.shapegrid { flex: 1; display: grid; grid-template-columns: repeat(6, 20px); grid-template-rows: 19px 20px 19px; align-items: center; padding-left: 2px; }
.shapegrid svg { width: 16px; height: 14px; fill: none; stroke: #2f4a7a; stroke-width: 1; }
.shapegrid .b { fill: url(#gBlue); stroke: #4a6a94; }
.shapegrid .f { fill: #2f4a7a; stroke: none; }
.smalls { padding: 1px 0 0 6px; display: flex; flex-direction: column; }
.small { height: 22px; gap: 3px; color: #333; justify-content: flex-start; white-space: nowrap; }
.small > svg:last-child { margin-left: 1px; }
.small:disabled, .big:disabled { color: #a0a0a0; }
.styles { width: 409px; margin-left: 6px; }
.lines { flex: 1; display: flex; align-items: center; gap: 31px; padding-left: 16px; }
.lines i { width: 25px; height: 2px; }
.l1 { background: #7f7f7f; } .l2 { background: #a3b8dc; } .l3 { background: #df9c9b; } .l4 { background: #cbd9a3; } .l5 { background: #b9a8cc; } .l6 { background: #9fcfde; } .l7 { background: #fac399; }
.wordart { width: 185px; margin-left: 6px; }
.tiles { flex: 1; display: flex; align-items: center; gap: 8px; padding-left: 4px; }
.tiles b { width: 48px; height: 48px; text-align: center; font: 700 46px/50px "Liberation Sans", sans-serif; background: #f5f2f8; color: #e9e6ec; -webkit-text-stroke: 1px #999; text-shadow: 1px 1px 2px #aaa; }
.tiles .a2 { -webkit-text-stroke-color: #aaa; }
.tiles .a3 { -webkit-text-stroke-color: #ccc; color: #f5f2f8; text-shadow: 1px 1px 1px #ddd; }
.serifA { width: 16px; text-align: center; font: 700 16px/16px "Liberation Serif", serif; color: #888; }
.ta { font-family: "Liberation Serif", serif; font-weight: 700; fill: #999; }
.bigs { padding: 5px 0 0 2px; }
.big { flex-direction: column; justify-content: flex-start; white-space: nowrap; text-align: center; }
.big > svg:first-child { margin-bottom: 3px; }
.big > svg:last-child { margin-top: 4px; }
.big span svg { display: inline-block; vertical-align: middle; }
.g4 .gbody { display: grid; grid-template-columns: 74px 64px 76px; }
.g5 .gbody { display: grid; grid-template-columns: 50px 81px 65px 65px 88px 91px; }
.align { position: relative; margin-top: -3px; }
.alignbtn { width: 90px; height: 22px; gap: 4px; padding-bottom: 1px; border: 1px solid #c2922f; border-radius: 3px; background: linear-gradient(#f8d069, #fbdc64 50%, #ffe873); }
.menu { position: absolute; z-index: 5; left: 0; top: 22px; width: 228px; padding: 0 0 2px; border: 1px solid #a7abb0; border-radius: 0 2px 2px 2px; background: linear-gradient(90deg, #fff 25px, #e2e4e7 25px, #e2e4e7 26px, #fff 26px); box-shadow: 3px 3px 3px rgba(110, 105, 140, .3); }
.menu button { width: 100%; height: 22px; justify-content: flex-start; }
.menu button:disabled { color: #aaa; }
.menu i { width: 20px; height: 20px; margin: 0 11px 0 3px; display: flex; align-items: center; justify-content: center; }
.menu .checked { border: 1px solid #ef9a40; border-radius: 3px; background: #fdedc0; }
.menu u { text-underline-offset: 2px; }
.menu hr { height: 1px; margin: 2px 3px 1px 33px; border: 0; background: repeating-linear-gradient(90deg, #c4c4c4 0 3px, #fff 3px 5px); }
.flip { transform: scaleX(-1); }
.rot { transform: rotate(90deg) scaleY(-1); }
.rotl { transform: rotate(-90deg); }
.sizes { flex-direction: column; gap: 8px; padding: 10px 0 0 9px; }
.field { display: flex; align-items: center; gap: 6px; height: 21px; }
.field label { width: 30px; }
.spin { display: flex; align-items: flex-start; width: 71px; height: 21px; padding: 4px 6px 0 2px; border: 1px solid #d0d3d8; background: #fff; }
.spin input { flex: 1; min-width: 0; border: 0; padding: 0; font: inherit; color: #111; background: none; }

.work { flex: 1; min-height: 0; display: grid; grid-template-columns: 24px minmax(0, 1fr) 17px; grid-template-rows: 44px minmax(0, 1fr); background: linear-gradient(#cdd1d6, #b8bbc0); }
.tabsel { border: 1px solid #868c94; height: 24px; width: 25px; display: flex; align-items: center; justify-content: center; }
.tabsel button { width: 15px; height: 15px; border: 1px solid #868c94; background: #fff; }
.hruler { padding-top: 1px; display: flex; justify-content: center; }
.hruler text, .vruler text { font-size: 9px; text-anchor: middle; fill: #444; }
.vruler { grid-row: 2; grid-column: 1; padding-left: 5px; overflow: hidden; background: rgba(255, 255, 255, .12); }
.canvas { overflow: hidden; display: flex; justify-content: center; padding-top: 1px; }
.page { width: 951px; height: 1400px; background: #fff; box-shadow: 0 0 0 1px #999da2, 0 0 9px 2px #777b80; }
.scroll { grid-column: 3; grid-row: 1 / 3; display: flex; flex-direction: column; align-items: center; background: #dfe3ea; color: #444; }
.split { width: 9px; height: 2px; margin: 2px 0; background: #777; }
.rtoggle { width: 17px; height: 17px; border: 1px solid #868c94; }
.sarrow { height: 16px; width: 17px; flex: none; }
.track { flex: 1; width: 17px; }
.thumb { height: 64%; width: 16px; display: flex; align-items: center; justify-content: center; border: 1px solid #868c94; background: linear-gradient(90deg, #f1f4f8, #dfe3e9); }
.nav { height: 17px; width: 17px; }
.first { border-top: 1px solid #a9adb4; }

.status { flex: none; height: 21px; display: flex; border-top: 1px solid #8a8f96; background: linear-gradient(#e6e9ed, #d4d7db 50%, #bfc3c8); }
.status > button { padding: 0 9px 1px 8px; border-right: 1px solid #8f949a; }
.status > .proof { border: 0; }
.status > .lang { padding-left: 8px; }
.views { margin-left: auto; display: flex; align-items: center; padding: 0 4px 1px; border-left: 1px solid #8f949a; }
.views button { width: 18px; }
.views .on { width: 19px; height: 19px; border: 1px solid #c2922f; border-radius: 2px; background: #ffe070; }
.views .pct { width: 48px; padding-left: 4px; }
.views .round { width: 16px; height: 16px; border: 1px solid #777d86; border-radius: 8px; background: #f4f5f7; }
.zoom { width: 100px; height: 16px; margin: 0; appearance: none; background: linear-gradient(#8f959d, #8f959d) center / 100% 1px no-repeat; }
.zoom::-webkit-slider-thumb { appearance: none; width: 9px; height: 13px; border: 1px solid #6f7a88; border-radius: 1px 1px 4px 4px; background: #fff; }
.taskbar { flex: none; height: 2px; display: flex; gap: 2px; padding-left: 238px; background: #9a7072; }
.taskbar span { width: 60px; background: #c9b3b2; }
.taskbar .active { background: #fff; }
```
